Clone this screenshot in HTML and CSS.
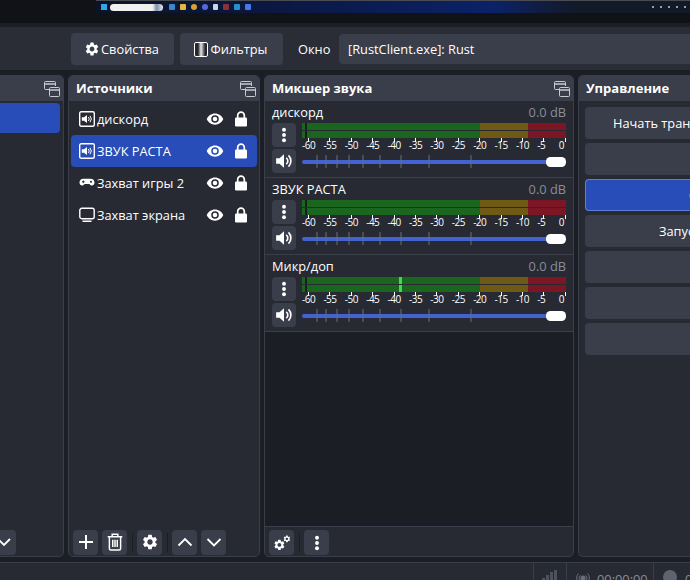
FILE: index.html
```html
<!DOCTYPE html>
<html>
<head>
	<meta charset="utf-8">
	<title>OBS</title>
	<link rel="stylesheet" href="styles.css">
</head>
<body>

	<svg class="defs" xmlns="http://www.w3.org/2000/svg">
		<symbol id="gear" viewBox="0 0 24 24"><path fill="currentColor" d="M19.14 12.94c.04-.3.06-.61.06-.94 0-.32-.02-.64-.07-.94l2.03-1.58a.49.49 0 0 0 .12-.61l-1.92-3.32a.488.488 0 0 0-.59-.22l-2.39.96c-.5-.38-1.03-.7-1.62-.94l-.36-2.54a.484.484 0 0 0-.48-.41h-3.84c-.24 0-.43.17-.47.41l-.36 2.54c-.59.24-1.13.57-1.62.94l-2.39-.96c-.22-.08-.47 0-.59.22L2.74 8.87c-.12.21-.08.47.12.61l2.03 1.58c-.05.3-.09.63-.09.94s.02.64.07.94l-2.03 1.58a.49.49 0 0 0-.12.61l1.92 3.32c.12.22.37.29.59.22l2.39-.96c.5.38 1.03.7 1.62.94l.36 2.54c.05.24.24.41.48.41h3.84c.24 0 .44-.17.47-.41l.36-2.54c.59-.24 1.13-.56 1.62-.94l2.39.96c.22.08.47 0 .59-.22l1.92-3.32c.12-.22.07-.47-.12-.61l-2.01-1.58zM12 15.6c-1.98 0-3.6-1.62-3.6-3.6s1.62-3.6 3.6-3.6 3.6 1.62 3.6 3.6-1.62 3.6-3.6 3.6z"/></symbol>
		<symbol id="undock" viewBox="0 0 16 16"><g fill="none" stroke="#c8cad0" stroke-width="1"><path d="M.5 7.5v-6a1 1 0 0 1 1-1h9a1 1 0 0 1 1 1v3.5"/><path d="M.5 3h11" stroke-width="1.4"/><rect x="5.5" y="6.5" width="10" height="9" rx="1"/><path d="M5.5 9h10" stroke-width="1.4"/><path d="M.5 7.5a1 1 0 0 0 1 1h4"/></g></symbol>
		<symbol id="eye" viewBox="0 0 24 24"><path fill="currentColor" d="M12 4.5C7 4.5 2.73 7.61 1 12c1.73 4.39 6 7.5 11 7.5s9.27-3.11 11-7.5c-1.73-4.39-6-7.5-11-7.5zM12 17a5 5 0 1 1 0-10 5 5 0 0 1 0 10zm0-8a3 3 0 1 0 0 6 3 3 0 0 0 0-6z"/></symbol>
		<symbol id="lock" viewBox="0 0 14 16"><rect x="1" y="6.5" width="12" height="9" rx="1.2" fill="currentColor"/><path d="M3.7 7V4.400a3.300 3.300 0 0 1 6.600 0V7" fill="none" stroke="currentColor" stroke-width="1.700"/></symbol>
		<symbol id="audio" viewBox="0 0 16 16"><rect x=".7" y=".7" width="14.600" height="14.600" rx="1.500" fill="none" stroke="currentColor" stroke-width="1.400"/><path fill="currentColor" d="M2.800 6.300h2.200l3-2.300v8L5 9.700H2.800z"/><path d="M9.400 6a3 3 0 0 1 0 4M11 4.800a5 5 0 0 1 0 6.400" fill="none" stroke="currentColor"/></symbol>
		<symbol id="game" viewBox="0 0 16 16"><path fill="currentColor" d="M4.200 3.800h7.600c2 0 3.700 1.600 3.700 3.600 0 2-1.300 3-2.600 3-1.100 0-1.800-.7-2.600-1.500H5.700c-.8.800-1.500 1.500-2.600 1.500-1.300 0-2.600-1-2.600-3 0-2 1.700-3.600 3.700-3.600z"/><path d="M3 6.800h2.600M4.300 5.500v2.600" stroke="#272a33" stroke-width="1"/><circle cx="12" cy="6.800" r="1" fill="#272a33"/></symbol>
		<symbol id="screen" viewBox="0 0 16 16"><rect x=".8" y="1.300" width="14.400" height="10.400" rx="2" fill="none" stroke="currentColor" stroke-width="1.400"/><path d="M3.500 14.300h9" stroke="currentColor" stroke-width="1.400"/></symbol>
		<symbol id="dots" viewBox="0 0 24 24"><circle cx="12" cy="5" r="2.600" fill="currentColor"/><circle cx="12" cy="12" r="2.600" fill="currentColor"/><circle cx="12" cy="19" r="2.600" fill="currentColor"/></symbol>
		<symbol id="volume" viewBox="0 0 16 16"><path fill="currentColor" d="M1 5.500h3L8 2v12l-4-3.500H1z"/><path d="M10 5.200a3.500 3.500 0 0 1 0 5.600M12 3a7 7 0 0 1 0 10" fill="none" stroke="currentColor" stroke-width="1.500"/></symbol>
		<symbol id="slider" viewBox="0 0 264 14">
			<rect x="0" y="5" width="250" height="4" rx="2" fill="#4263d0"/>
			<path d="M15 0v13M24 0v13M35 0v13M47 0v13M61 0v13M78 0v13M99 0v13M127 0v13M169 0v13" stroke="#6b6e7a"/>
			<rect x="244" y="2" width="20" height="10" rx="4.500" fill="#fff"/>
		</symbol>
	</svg>

	<div class="top_strip">
		<div class="taskbar">
			<i class="tb_win"></i>
			<i class="tb_search"></i>
			<i class="tb_icon tb_a"></i>
			<i class="tb_icon tb_b"></i>
			<i class="tb_icon tb_c"></i>
			<i class="tb_icon tb_d"></i>
			<i class="tb_icon tb_e"></i>
			<i class="tb_icon tb_f"></i>
			<i class="tb_icon tb_g"></i>
			<i class="tb_icon tb_h"></i>
			<span class="tb_tray"></span>
		</div>
	</div>

	<div class="toolbar">
		<div class="btn tool_btn"><svg class="ic16"><use href="#gear"/></svg>Свойства</div>
		<div class="btn tool_btn"><i class="filter_icon"></i>Фильтры</div>
		<span class="win_label">Окно</span>
		<div class="combo">[RustClient.exe]: Rust</div>
	</div>

	<div class="docks">

		<div class="dock dock_scenes">
			<div class="dock_head"><svg class="undock"><use href="#undock"/></svg></div>
			<div class="dock_body scene_list"><div class="scene_row"></div></div>
			<div class="dock_tools scene_tools">
				<div class="btn sq scene_btn"><svg class="ic_chev" viewBox="0 0 16 16"><path d="M2 5l6 6 6-6" fill="none" stroke="currentColor" stroke-width="1.800"/></svg></div>
			</div>
		</div>

		<div class="dock dock_sources">
			<div class="dock_head"><b>Источники</b><svg class="undock"><use href="#undock"/></svg></div>
			<div class="dock_body source_list">
				<div class="source_row">
					<svg class="ic16"><use href="#audio"/></svg><span class="source_name">дискорд</span>
					<svg class="ic_eye"><use href="#eye"/></svg><svg class="ic_lock"><use href="#lock"/></svg>
				</div>
				<div class="source_row selected">
					<svg class="ic16"><use href="#audio"/></svg><span class="source_name">ЗВУК РАСТА</span>
					<svg class="ic_eye"><use href="#eye"/></svg><svg class="ic_lock"><use href="#lock"/></svg>
				</div>
				<div class="source_row">
					<svg class="ic16"><use href="#game"/></svg><span class="source_name">Захват игры 2</span>
					<svg class="ic_eye"><use href="#eye"/></svg><svg class="ic_lock"><use href="#lock"/></svg>
				</div>
				<div class="source_row">
					<svg class="ic16"><use href="#screen"/></svg><span class="source_name">Захват экрана</span>
					<svg class="ic_eye"><use href="#eye"/></svg><svg class="ic_lock"><use href="#lock"/></svg>
				</div>
			</div>
			<div class="dock_tools">
				<div class="btn sq"><svg class="ic16" viewBox="0 0 16 16"><path d="M8 1v14M1 8h14" stroke="currentColor" stroke-width="2"/></svg></div>
				<div class="btn sq"><svg class="ic18" viewBox="0 0 16 16"><path d="M1.500 3.300h13M5.500 3V1.200h5V3M3 3.500v10.300a1.300 1.300 0 0 0 1.300 1.300h7.400a1.300 1.300 0 0 0 1.300-1.300V3.500M6 6v6.500M8 6v6.500M10 6v6.500" fill="none" stroke="currentColor" stroke-width="1.300"/></svg></div>
				<i class="sep"></i>
				<div class="btn sq"><svg class="ic18"><use href="#gear"/></svg></div>
				<i class="sep"></i>
				<div class="btn sq"><svg class="ic_chev" viewBox="0 0 16 16"><path d="M1.500 11.500L8 5l6.500 6.500" fill="none" stroke="currentColor" stroke-width="1.800"/></svg></div>
				<div class="btn sq"><svg class="ic_chev" viewBox="0 0 16 16"><path d="M1.500 5L8 11.500 14.500 5" fill="none" stroke="currentColor" stroke-width="1.800"/></svg></div>
			</div>
		</div>

		<div class="dock dock_mixer">
			<div class="dock_head"><b>Микшер звука</b><svg class="undock"><use href="#undock"/></svg></div>
			<div class="mixer_body">

				<div class="channel">
					<div class="ch_head"><span>дискорд</span><span class="db">0.0 dB</span></div>
					<div class="ch_main">
						<div class="ch_btns">
							<div class="btn ch_btn"><svg class="ic18"><use href="#dots"/></svg></div>
							<div class="btn ch_btn"><svg class="ic18"><use href="#volume"/></svg></div>
						</div>
						<div class="ch_meters">
							<div class="bar"></div>
							<div class="bar"></div>
							<div class="scale_ticks"></div>
							<div class="scale"><span>-60</span><span>-55</span><span>-50</span><span>-45</span><span>-40</span><span>-35</span><span>-30</span><span>-25</span><span>-20</span><span>-15</span><span>-10</span><span>-5</span><span>0</span></div>
							<svg class="slider"><use href="#slider"/></svg>
						</div>
					</div>
				</div>

				<div class="channel">
					<div class="ch_head"><span>ЗВУК РАСТА</span><span class="db">0.0 dB</span></div>
					<div class="ch_main">
						<div class="ch_btns">
							<div class="btn ch_btn"><svg class="ic18"><use href="#dots"/></svg></div>
							<div class="btn ch_btn"><svg class="ic18"><use href="#volume"/></svg></div>
						</div>
						<div class="ch_meters">
							<div class="bar"></div>
							<div class="bar"></div>
							<div class="scale_ticks"></div>
							<div class="scale"><span>-60</span><span>-55</span><span>-50</span><span>-45</span><span>-40</span><span>-35</span><span>-30</span><span>-25</span><span>-20</span><span>-15</span><span>-10</span><span>-5</span><span>0</span></div>
							<svg class="slider"><use href="#slider"/></svg>
						</div>
					</div>
				</div>

				<div class="channel">
					<div class="ch_head"><span>Микр/доп</span><span class="db">0.0 dB</span></div>
					<div class="ch_main">
						<div class="ch_btns">
							<div class="btn ch_btn"><svg class="ic18"><use href="#dots"/></svg></div>
							<div class="btn ch_btn"><svg class="ic18"><use href="#volume"/></svg></div>
						</div>
						<div class="ch_meters">
							<div class="bar bar_live"></div>
							<div class="bar bar_live"></div>
							<div class="scale_ticks"></div>
							<div class="scale"><span>-60</span><span>-55</span><span>-50</span><span>-45</span><span>-40</span><span>-35</span><span>-30</span><span>-25</span><span>-20</span><span>-15</span><span>-10</span><span>-5</span><span>0</span></div>
							<svg class="slider"><use href="#slider"/></svg>
						</div>
					</div>
				</div>

			</div>
			<div class="dock_tools mixer_tools">
				<div class="btn sq">
					<svg class="ic18" viewBox="0 0 24 24"><use href="#gear" x="0" y="6" width="17" height="17"/><use href="#gear" x="13" y="1" width="11" height="11"/></svg>
				</div>
				<i class="sep"></i>
				<div class="btn sq"><svg class="ic18"><use href="#dots"/></svg></div>
			</div>
		</div>

		<div class="dock dock_controls">
			<div class="dock_head"><b>Управление</b></div>
			<div class="dock_body control_list">
				<div class="btn ctrl_btn ctrl_stream">Начать трансляцию</div>
				<div class="btn ctrl_btn"></div>
				<div class="btn ctrl_btn ctrl_on">Студия</div>
				<div class="btn ctrl_btn ctrl_run">Запустить</div>
				<div class="btn ctrl_btn"></div>
				<div class="btn ctrl_btn"></div>
				<div class="btn ctrl_btn"></div>
			</div>
		</div>

	</div>

	<div class="status">
		<div class="st_fill"></div>
		<div class="st_cell st_signal"><i></i><i></i><i></i><i></i></div>
		<div class="st_cell st_time"><svg class="ic16" viewBox="0 0 16 16"><circle cx="8" cy="8" r="2.500" fill="#6b6e7a"/><path d="M3.500 3.500a6.400 6.400 0 0 0 0 9M12.500 3.500a6.400 6.400 0 0 1 0 9M5.300 5.300a3.800 3.800 0 0 0 0 5.400M10.700 5.300a3.800 3.800 0 0 1 0 5.400" fill="none" stroke="#6b6e7a"/></svg><span>00:00:00</span></div>
		<div class="st_cell st_rec"><i class="rec_dot"></i><span>00:00:00</span></div>
	</div>

</body>
</html>
```

FILE: styles.css
```css
html, body {margin: 0; padding: 0;}
body {width: 690px; height: 580px; overflow: hidden; background: #1c1e26; color: #fff;
		font-family: "Open Sans", "Noto Sans", sans-serif; font-size: 12.8px;}
.defs {display: none;}
svg {display: block; flex: none;}

/* desktop strip seen over the top of the window */
.top_strip {height: 23px; background: #111217; padding-left: 96px;}
.taskbar {height: 12px; border-top: 1px solid #4a4c52; display: flex; align-items: center;
		background: linear-gradient(90deg, #0b1426 0, #0a1a4a 230px, #0c2268 400px, #101d44 440px, #121a28 480px, #121a28 100%);}
.tb_win {width: 6px; height: 6px; margin-left: 5px; background: #2fa8e8;}
.tb_search {width: 53px; height: 7px; margin-left: 3px; border-radius: 4px;
		background: linear-gradient(90deg, #f0f0f0 80%, #7f8fa8 88%, #e8eaf0 100%);}
.tb_icon {width: 6px; height: 6px; margin-left: 5px; border-radius: 1px;}
.tb_a {margin-left: 6px; background: #3a88c8;}
.tb_b {background: #e8b838;}
.tb_c {background: #d8a030; border-radius: 50%;}
.tb_d {background: #5868d8; border-radius: 50%;}
.tb_e {background: #c8d8e8; width: 5px;}
.tb_f {background: #8a3038;}
.tb_g {background: #2890c8;}
.tb_h {background: #4878e8;}
.tb_tray {margin-left: auto; margin-right: 2px; width: 36px; height: 2px;
		background: repeating-linear-gradient(90deg, #9aa0aa 0 2px, transparent 2px 8px);}

.btn {background: #3a3d4a; border-radius: 4px; display: flex; align-items: center; justify-content: center;}

.toolbar {margin-top: 4px; height: 43px; background: #2a2c36; display: flex; align-items: center;
		padding-left: 71px; box-sizing: border-box;}
.tool_btn {width: 103px; height: 32px; margin-right: 6px; gap: 1px; margin-top: 1px; padding-right: 2px; box-sizing: border-box;}
.filter_icon {width: 12px; height: 13px; border: 1.5px solid #fff; border-radius: 2px; margin-right: 2px;
		background: linear-gradient(90deg, #26272e 0 25%, #e8e8e8 50%, #26272e 85%);}
.win_label {margin-left: 9px; width: 41px;}
.combo {flex: 1; height: 30px; line-height: 30px; padding-left: 9px; background: #3a3d4a;
		border-radius: 4px 0 0 4px;}

.docks {margin-top: 5px; height: 482px; display: flex; gap: 4px;}
.dock {flex: none; box-sizing: border-box; border: 1px solid #3a3d4a; border-radius: 5px; background: #272a33;
		display: flex; flex-direction: column; overflow: hidden;}
.dock_scenes {width: 64px; border-left: 0; border-radius: 0 5px 5px 0;}
.dock_sources {width: 192px;}
.dock_mixer {width: 310px;}
.dock_controls {flex: 1; border-right: 0; border-radius: 5px 0 0 5px;}
.dock_head {height: 25px; flex: none; background: #3a3d4a; display: flex; align-items: center;
		justify-content: space-between; padding: 0 3px 0 7px; font-size: 13px;}
.dock_head b {margin-bottom: 2px;}
.dock_scenes .dock_head {justify-content: flex-end;}
.undock {width: 16px; height: 16px;}
.dock_body {flex: 1;}
.dock_tools {height: 30px; flex: none; box-sizing: border-box; display: flex; align-items: center;
		padding: 2px 0 0 4px; gap: 4px;}
.btn.sq {width: 25px; height: 25px;}
.sep {width: 1px; height: 19px; background: #1c1e26; margin: 0 0 0 1px;}
.ic16 {width: 16px; height: 16px;}
.ic18 {width: 18px; height: 18px;}
.ic_chev {width: 16px; height: 16px;}
.ic_eye {width: 18px; height: 18px; margin-left: auto;}
.ic_lock {width: 14px; height: 16px; margin-left: 10px; margin-right: 9px;}

.scene_list {padding-top: 2px;}
.scene_row {height: 30px; width: 60px; background: #284cb8; border-radius: 0 4px 4px 0;}
.scene_tools {padding-left: 0;}
.btn.scene_btn {width: 16px; border-radius: 0 4px 4px 0; justify-content: flex-end; padding-right: 4px;
		box-sizing: border-box; overflow: hidden;}

.source_list {padding: 2px 2px 0 2px;}
.source_row {height: 32px; padding-left: 8px; border-radius: 4px; display: flex; align-items: center; white-space: nowrap;}
.source_row.selected {background: #284cb8;}
.source_name {margin-left: 2px;}

.mixer_body {flex: 1; background: #1c1e26;}
.mixer_tools {border-top: 1px solid #3a3d4a;}
.channel {height: 77px; box-sizing: border-box; background: #272a33; border-bottom: 1px solid #3a3d4a;
		padding: 0 7px;}
.ch_head {height: 22px; display: flex; justify-content: space-between; align-items: center;}
.db {color: #8a8d98;}
.ch_main {display: flex; gap: 6px;}
.ch_btns {width: 24px; display: flex; flex-direction: column; gap: 2px;}
.ch_btn {width: 24px; height: 24px;}
.ch_meters {width: 264px;}
.bar {height: 7px; margin-bottom: 1px;
		background: linear-gradient(90deg, #1a661f 0 3px, #1c1e26 3px 5px, #1a661f 5px 178px, #6e5a14 178px 226px, #7c1524 226px);}
.bar_live {background: linear-gradient(90deg, transparent 97px, #3ddc4c 97px 100px, transparent 100px),
		linear-gradient(90deg, #1a661f 0 3px, #1c1e26 3px 5px, #1a661f 5px 178px, #6e5a14 178px 226px, #7c1524 226px);}
.scale_ticks {height: 4px; margin: -1px 0 -2px 6px;
		background: repeating-linear-gradient(90deg, #fff 0 1px, transparent 1px 21.4px);}
.scale {display: grid; grid-template-columns: repeat(13, 21.4px); height: 11px; line-height: 11px;
		font-size: 10px; letter-spacing: -0.5px; margin-bottom: 4px; white-space: nowrap;}
.slider {width: 264px; height: 14px;}

.control_list {padding: 6px 0 0 6px; display: flex; flex-direction: column; gap: 4px;}
.ctrl_btn {height: 32px; flex: none; justify-content: flex-start; box-sizing: border-box; white-space: nowrap;
		overflow: hidden; border-radius: 4px 0 0 4px;}
.ctrl_stream {padding-left: 28px;}
.ctrl_on {background: #284cb8; border: 1px solid #5a7fd8; border-right: 0; padding-left: 103px;}
.ctrl_run {padding-left: 74px;}

.status {margin-top: 5px; height: 18px; overflow: hidden; box-sizing: border-box; background: #272a33;
		border-top: 1px solid #3a3d4a; display: flex; color: #8a8d98;}
.st_fill {width: 533px; flex: none;}
.st_cell {flex: none; border-left: 1px solid #3a3d4a; display: flex; padding-top: 7px; box-sizing: border-box;}
.st_signal {width: 33px; gap: 1px; align-items: flex-start; padding-left: 8px;}
.st_signal i {width: 3px; background: #4e5160; margin-top: 8px; height: 12px;}
.st_signal i:nth-child(2) {margin-top: 5px; height: 15px;}
.st_signal i:nth-child(3) {margin-top: 2px; height: 18px;}
.st_signal i:nth-child(4) {margin-top: 0; height: 20px;}
.st_time {width: 87px; padding-left: 8px; gap: 6px;}
.st_rec {padding-left: 9px; gap: 8px;}
.rec_dot {width: 14px; height: 14px; border-radius: 50%; background: #5f6270;}
```
